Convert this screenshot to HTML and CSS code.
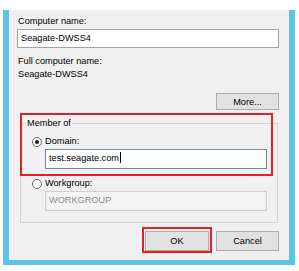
FILE: index.html
```html
<!DOCTYPE html>
<html>
<head>
<meta charset="utf-8">
<link rel="stylesheet" href="styles.css">
</head>
<body>
<div class="top"></div>
<div class="window">
  <div class="content">
    <div class="label">Computer name:</div>
    <div class="textbox name-box">Seagate-DWSS4</div>
    <div class="label label-full">Full computer name:</div>
    <div class="label">Seagate-DWSS4</div>
    <div class="more-row"><button class="btn btn-more">More...</button></div>
    <fieldset class="group">
      <legend>Member of</legend>
      <div class="radio"><span class="dot checked"></span><span>Domain:</span></div>
      <div class="textbox sub-box focus">test.seagate.com<span class="caret"></span></div>
      <div class="radio radio-work"><span class="dot"></span><span>Workgroup:</span></div>
      <div class="textbox sub-box disabled">WORKGROUP</div>
    </fieldset>
    <div class="actions">
      <button class="btn btn-ok">OK</button>
      <button class="btn btn-cancel">Cancel</button>
    </div>
    <div class="mark mark-member"></div>
    <div class="mark mark-ok"></div>
  </div>
</div>
</body>
</html>
```
FILE: styles.css
```css
body {
  margin: 0;
  background: #fff;
  font-family: "Liberation Sans", Arial, sans-serif;
  font-size: 9.2px;
  color: #000;
}
.top { height: 10px; }
.window {
  margin-left: 3px;
  width: 280px;
  border: 6px solid #5dc4e7;
  border-top: 0;
  border-bottom-width: 5px;
  box-shadow: 0 1px 0 #3a3a3a;
}
.content {
  position: relative;
  height: 250px;
  background: #f0f0f0;
  padding: 5px 10px 0 8px;
  box-sizing: border-box;
}
.label {
  line-height: 13px;
  padding-left: 1px;
}
.label-full { margin-top: 7px; }
.textbox {
  box-sizing: border-box;
  height: 19px;
  border: 1px solid #a3a3a3;
  background: #fff;
  padding: 0 3px;
  line-height: 16px;
  margin-top: 1px;
  white-space: nowrap;
}
.more-row {
  display: flex;
  justify-content: flex-end;
  margin-top: 12px;
}
.btn {
  font: inherit;
  color: #000;
  box-sizing: border-box;
  border: 1px solid #adadad;
  background: #e1e1e1;
  padding: 0;
  border-radius: 0;
}
.btn-more { width: 63px; height: 17px; }
.group {
  margin: 7px 1px 0 3px;
  padding: 5px 0 11px 11px;
  border: 1px solid #d5d5d5;
  min-width: 0;
}
.group legend {
  padding: 0 1px;
  margin-left: -6px;
  line-height: 13px;
}
.radio {
  display: flex;
  align-items: center;
  gap: 3px;
  line-height: 13px;
}
.radio-work { margin-top: 8px; }
.dot {
  box-sizing: border-box;
  width: 10px;
  height: 10px;
  border-radius: 50%;
  border: 1px solid #6a6a6a;
  background: #fbfbfb;
  display: flex;
  align-items: center;
  justify-content: center;
}
.dot.checked::after {
  content: "";
  width: 4px;
  height: 4px;
  border-radius: 50%;
  background: #1e1e1e;
}
.sub-box {
  margin-left: 13px;
  width: 222px;
  height: 20px;
  line-height: 17px;
}
.focus { border-color: #6f8aa6; }
.caret {
  display: inline-block;
  width: 1px;
  height: 11px;
  background: #000;
  vertical-align: -2px;
  margin-left: 1px;
}
.disabled {
  background: #f3f3f3;
  border-color: #cfcfcf;
  color: #8a8a8a;
}
.actions {
  display: flex;
  justify-content: flex-end;
  gap: 7px;
  margin-top: 8px;
}
.btn-ok { width: 64px; height: 20px; }
.btn-cancel { width: 63px; height: 20px; }
.mark {
  position: absolute;
  box-sizing: border-box;
  border: 2px solid #e0212b;
}
.mark-member { left: 11px; top: 103px; width: 253px; height: 63px; }
.mark-ok { left: 133px; top: 217px; width: 70px; height: 26px; }
```
